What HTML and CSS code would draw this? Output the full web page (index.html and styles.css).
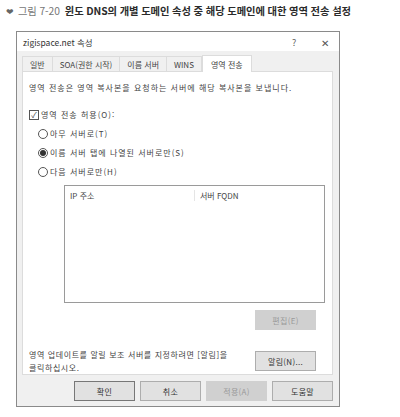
FILE: index.html
```html
<!DOCTYPE html>
<html lang="ko">
<head>
<meta charset="UTF-8">
<link rel="stylesheet" href="styles.css">
</head>
<body>
<div class="caption"><span class="mark">&#10084;</span><span class="num">그림 7-20</span><b>윈도 DNS의 개별 도메인 속성 중 해당 도메인에 대한 영역 전송 설정</b></div>

<div class="dialog">
  <div class="titlebar">
    <span class="title">zigispace.net 속성</span>
    <span class="help">?</span>
    <span class="close">&#x2715;</span>
  </div>
  <div class="frame">
    <div class="tabs">
      <span class="tab">일반</span>
      <span class="tab">SOA(권한 시작)</span>
      <span class="tab">이름 서버</span>
      <span class="tab">WINS</span>
      <span class="tab active">영역 전송</span>
    </div>
    <div class="panel">
      <p class="intro">영역 전송은 영역 복사본을 요청하는 서버에 해당 복사본을 보냅니다.</p>
      <div class="check"><span class="box">&#10003;</span>영역 전송 허용(O):</div>
      <div class="radios">
        <div class="radio"><span class="dot"></span>아무 서버로(T)</div>
        <div class="radio on"><span class="dot"></span>이름 서버 탭에 나열된 서버로만(S)</div>
        <div class="radio"><span class="dot"></span>다음 서버로만(H)</div>
      </div>
      <div class="list">
        <div class="list-head">
          <span class="col ip">IP 주소</span>
          <span class="col fqdn">서버 FQDN</span>
        </div>
      </div>
      <div class="edit-row"><span class="btn disabled">편집(E)</span></div>
      <div class="notify-row">
        <p>영역 업데이트를 알릴 보조 서버를 지정하려면 [알림]을<br>클릭하십시오.</p>
        <span class="btn">알림(N)...</span>
      </div>
    </div>
    <div class="buttons">
      <span class="btn default">확인</span>
      <span class="btn">취소</span>
      <span class="btn disabled">적용(A)</span>
      <span class="btn">도움말</span>
    </div>
  </div>
</div>
</body>
</html>
```

FILE: styles.css
```css
* {
  box-sizing: border-box;
}
body {
  margin: 0;
  width: 400px;
  height: 417px;
  background: #fff;
  font-family: "Noto Sans CJK KR", "Noto Sans", sans-serif;
  color: #333;
}
p {
  margin: 0;
}

.caption {
  height: 31px;
  padding: 3px 0 0 6px;
  font-size: 10.3px;
  letter-spacing: -0.1px;
  white-space: nowrap;
}
.caption .mark {
  color: #666;
  font-size: 9px;
  margin-right: 4px;
}
.caption .num {
  color: #777;
  margin-right: 5px;
}
.caption b {
  color: #2b2b2b;
}

.dialog {
  margin-left: 16px;
  width: 324px;
  height: 376px;
  border: 1px solid #8a8a8a;
  display: flex;
  flex-direction: column;
  font-size: 8px;
  color: #444;
}
.titlebar {
  height: 22px;
  background: #fff;
  display: flex;
  align-items: center;
  padding: 1px 0 0 6px;
}
.titlebar .title {
  flex: 1;
  font-size: 8.5px;
  color: #333;
}
.titlebar .help {
  width: 29px;
  font-size: 9px;
  color: #666;
}
.titlebar .close {
  width: 18px;
  font-size: 10px;
  color: #555;
}

.frame {
  flex: 1;
  background: #f0f0f0;
  padding: 3px 6px 5px 5px;
  display: flex;
  flex-direction: column;
}
.tabs {
  display: flex;
  align-items: flex-end;
  height: 17px;
}
.tab {
  height: 15px;
  padding: 1px 7px 0;
  border: 1px solid #dcdcdc;
  border-bottom: none;
  margin-right: -1px;
  background: #f0f0f0;
  display: flex;
  align-items: center;
}
.tab.active {
  height: 17px;
  background: #fff;
  padding: 0 8px;
  margin-left: 1px;
  position: relative;
  top: 1px;
}
.panel {
  height: 304px;
  background: #fff;
  border: 1px solid #dcdcdc;
  padding: 10px 8px 0 6px;
  display: flex;
  flex-direction: column;
}
.intro {
  letter-spacing: 1px;
}
.check {
  margin-top: 16px;
  display: flex;
  align-items: center;
  letter-spacing: 1px;
}
.box {
  width: 10px;
  height: 10px;
  border: 1px solid #555;
  font-size: 8px;
  line-height: 8px;
  text-align: center;
  color: #444;
  margin-right: 2px;
  letter-spacing: 0;
}
.radios {
  padding-left: 9px;
}
.radio {
  height: 19px;
  display: flex;
  align-items: center;
  letter-spacing: 1px;
}
.radio:first-child {
  margin-top: 4px;
}
.dot {
  width: 10px;
  height: 10px;
  border: 1px solid #555;
  border-radius: 50%;
  margin-right: 2px;
  display: flex;
  align-items: center;
  justify-content: center;
}
.radio.on .dot::after {
  content: "";
  width: 6px;
  height: 6px;
  border-radius: 50%;
  background: #333;
}
.list {
  margin: 4px 0 0 35px;
  width: 261px;
  height: 119px;
  border: 1px solid #9a9a9a;
}
.list-head {
  display: flex;
  height: 19px;
  align-items: center;
}
.col {
  padding-left: 5px;
}
.col.ip {
  width: 130px;
  border-right: 1px solid #e5e5e5;
}
.edit-row {
  display: flex;
  justify-content: flex-end;
  padding-right: 8px;
  margin-top: 7px;
}
.notify-row {
  margin-top: 18px;
  display: flex;
  justify-content: space-between;
  align-items: center;
  padding-right: 8px;
}
.notify-row p {
  line-height: 13px;
  letter-spacing: 0.6px;
}

.btn {
  width: 61px;
  height: 20px;
  display: flex;
  align-items: center;
  justify-content: center;
  background: #e1e1e1;
  border: 1px solid #adadad;
  color: #333;
  letter-spacing: 0.3px;
}
.btn.disabled {
  background: #d0d0d0;
  border-color: #d0d0d0;
  color: #999;
}
.btn.default {
  border-color: #777;
}
.buttons {
  display: flex;
  justify-content: flex-end;
  gap: 5px;
  margin-top: 6px;
}
```
